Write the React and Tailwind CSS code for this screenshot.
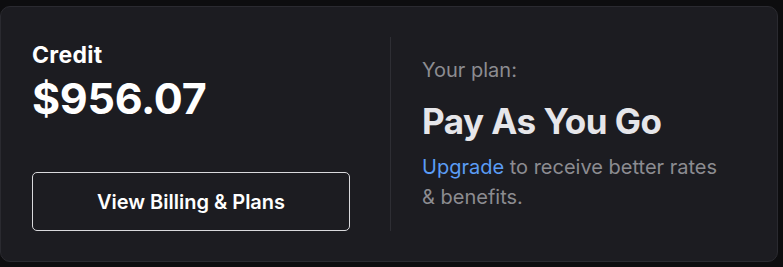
export default function App() {
  return (
    <div className="min-h-screen bg-[#0d0d0f] pt-[6px] pr-[5px] font-['Inter','Noto_Sans',sans-serif]">
      <div className="flex h-[256px] rounded-[10px] border border-[#2a2a30] bg-[#1c1c21] py-[30px] pl-[31px]">
        <div className="flex w-[318px] flex-col justify-between">
          <div className="pt-[5px]">
            <p className="text-[23px] leading-[26px] font-bold tracking-[0.3px] text-white">Credit</p>
            <p className="mt-[6px] text-[43px] leading-[48px] font-bold tracking-[-0.3px] text-white">$956.07</p>
          </div>
          <button className="h-[59px] w-full rounded-[5px] border border-[#d9d9dc] text-[20px] font-semibold text-white">
            View Billing &amp; Plans
          </button>
        </div>
        <div className="ml-[40px] w-px bg-[#2e2e34]" />
        <div className="pl-[31px] pt-[19px]">
          <p className="text-[20px] leading-[28px] text-[#8c8c91]">Your plan:</p>
          <h2 className="mt-[17px] text-[35px] leading-[40px] font-bold tracking-[-0.5px] text-[#e6e6ea]">Pay As You Go</h2>
          <p className="mt-[11px] w-[300px] text-[20px] leading-[30px] text-[#8c8c91]">
            <span className="text-[#5b9cf6]">Upgrade</span> to receive better rates &amp; benefits.
          </p>
        </div>
      </div>
    </div>
  );
}
